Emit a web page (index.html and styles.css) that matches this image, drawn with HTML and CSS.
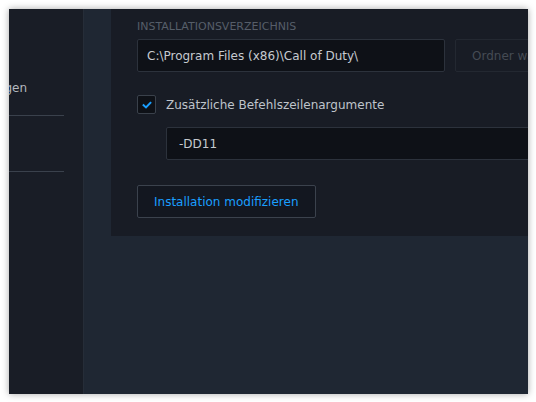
FILE: index.html
```html
<!DOCTYPE html>
<html lang="de">
<head>
    <meta charset="UTF-8">
    <meta name="viewport" content="width=device-width, initial-scale=1.0">
    <title>Spieleigenschaften</title>
    <link rel="stylesheet" href="styles.css">
</head>
<body>
    <div class="window">
        <!-- linke Navigation, nach links hinaus abgeschnitten -->
        <div class="sidebar">
            <div class="nav-item"><span class="nav-text">Einstellungen</span></div>
            <div class="nav-item"><span class="nav-text">Updates</span></div>
        </div>

        <div class="main">
            <div class="panel">
                <div class="field-label">Installationsverzeichnis</div>
                <div class="path-row">
                    <div class="input path-input">C:\Program Files (x86)\Call of Duty\</div>
                    <div class="button ghost">Ordner wählen</div>
                </div>

                <label class="check-row">
                    <span class="checkbox">
                        <svg width="12" height="12" viewBox="0 0 12 12">
                            <path d="M2.6 6.2 L5 8.4 L9.4 3.8" fill="none" stroke="#1a9fff" stroke-width="2" stroke-linecap="square"/>
                        </svg>
                    </span>
                    <span class="check-text">Zusätzliche Befehlszeilenargumente</span>
                </label>

                <div class="input args-input">-DD11</div>

                <div class="button primary">Installation modifizieren</div>
            </div>
        </div>
    </div>
</body>
</html>
```

FILE: styles.css
```css
* {
    margin: 0;
    padding: 0;
    box-sizing: border-box;
}

body {
    font-family: 'DejaVu Sans', Verdana, sans-serif;
    font-size: 12px;
    background: #ffffff;
    padding: 9px;
    overflow: hidden;
}

.window {
    width: 519px;
    height: 385px;
    display: flex;
    overflow: hidden;
    background: #1f2733;
    box-shadow: 0 0 7px rgba(0, 0, 0, 0.35);
}

/* Navigation */
.sidebar {
    width: 75px;
    flex-shrink: 0;
    background: #191d26;
    border-right: 1px solid #262d38;
    padding-top: 51px;
    padding-right: 19px;
}

.nav-item {
    height: 56px;
    border-bottom: 1px solid #3a414c;
    display: flex;
    align-items: center;
    justify-content: flex-end;
    padding-right: 37px;
    color: #b3b8bf;
}

.nav-item:nth-child(2) .nav-text {
    visibility: hidden;
}

.nav-text {
    white-space: nowrap;
}

/* Inhalt */
.main {
    flex: 1;
    padding-left: 27px;
    overflow: hidden;
}

.panel {
    width: 480px;
    background: #181c25;
    padding: 11px 0 18px 26px;
}

.field-label {
    font-size: 11px;
    line-height: 14px;
    text-transform: uppercase;
    color: #565e69;
    margin-bottom: 5px;
}

.path-row {
    display: flex;
    gap: 10px;
}

.input {
    height: 33px;
    display: flex;
    align-items: center;
    background: #0e1117;
    border: 1px solid #2c323c;
    border-radius: 2px;
    color: #c6cad0;
    white-space: nowrap;
}

.path-input {
    width: 308px;
    flex-shrink: 0;
    padding-left: 9px;
}

.button {
    height: 33px;
    display: flex;
    align-items: center;
    padding: 0 16px;
    border-radius: 2px;
    white-space: nowrap;
}

.button.ghost {
    flex-shrink: 0;
    border: 1px solid #232831;
    color: #454b54;
}

.check-row {
    display: flex;
    align-items: center;
    gap: 10px;
    margin-top: 23px;
    color: #bfc4cb;
}

.checkbox {
    width: 19px;
    height: 19px;
    display: flex;
    align-items: center;
    justify-content: center;
    background: #0e1117;
    border: 1px solid #3a414b;
    border-radius: 2px;
}

.check-text {
    padding-top: 1px;
}

.args-input {
    margin: 13px 0 0 29px;
    padding-left: 12px;
}

.button.primary {
    display: inline-flex;
    margin-top: 25px;
    background: #131720;
    border: 1px solid #3b424d;
    color: #1a9fff;
}
```
